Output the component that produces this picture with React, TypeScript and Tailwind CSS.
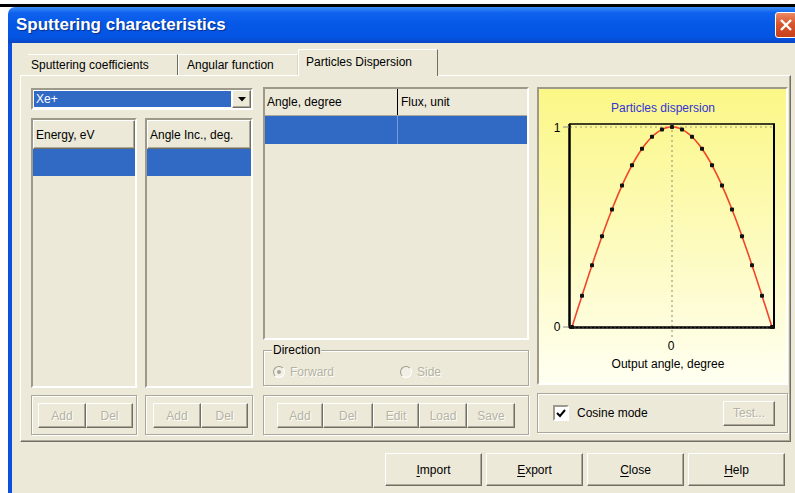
import React from "react";

const face = "bg-[#ece9d8]";
const raised =
  "border border-t-white border-l-white border-b-[#716f64] border-r-[#716f64] shadow-[inset_-1px_-1px_0_#aca899]";
const sunken =
  "border-2 border-t-[#9d9a8c] border-l-[#9d9a8c] border-b-white border-r-white";
const etched =
  "border border-[#aca899] shadow-[inset_1px_1px_0_#fff,1px_1px_0_#fff]";

function Btn({
  label,
  w,
  h = 25,
  disabled,
  hot,
}: {
  label: string;
  w: number;
  h?: number;
  disabled?: boolean;
  hot?: boolean;
}) {
  const first = label.slice(0, 1);
  const rest = label.slice(1);
  return (
    <div
      className={`${raised} ${face} flex shrink-0 items-center justify-center ${
        disabled ? "text-[#b5b2a2] [text-shadow:1px_1px_0_#fff]" : "text-black"
      }`}
      style={{ width: w, height: h }}
    >
      {hot ? (
        <span>
          <span className="underline underline-offset-2">{first}</span>
          {rest}
        </span>
      ) : (
        label
      )}
    </div>
  );
}

function ListBox({ title, w }: { title: string; w: number }) {
  return (
    <div className={`${sunken} bg-[#ece9d8] flex h-[270px] flex-col`} style={{ width: w }}>
      <div className={`${raised} flex h-[29px] items-center px-[2px]`}>{title}</div>
      <div className="h-[27px] bg-[#316ac5]" />
    </div>
  );
}

function Chart() {
  const x0 = 33;
  const base = 238;
  const amp = 200;
  const curve = Array.from({ length: 121 }, (_, i) => {
    const t = -Math.PI / 2 + (i * Math.PI) / 120;
    return `${x0 + (i * 200) / 120},${base - amp * Math.cos(t)}`;
  }).join(" ");
  const dots = Array.from({ length: 21 }, (_, i) => {
    const t = -Math.PI / 2 + (i * Math.PI) / 20;
    return [x0 + i * 10, base - amp * Math.cos(t)];
  });
  return (
    <svg width={247} height={294} className="block">
      <defs>
        <linearGradient id="bg" x1="0" y1="0" x2="0" y2="1">
          <stop offset="0" stopColor="#fbf786" />
          <stop offset="0.55" stopColor="#fdfbc0" />
          <stop offset="1" stopColor="#fffff2" />
        </linearGradient>
      </defs>
      <rect width={247} height={294} fill="url(#bg)" />
      <text
        x={124}
        y={23}
        textAnchor="middle"
        fontSize={12}
        fill="#3333d6"
        fontFamily="Liberation Sans, Arial, sans-serif"
      >
        Particles dispersion
      </text>
      {/* grid */}
      <line x1={31} y1={38} x2={234} y2={38} stroke="#9a9a88" strokeDasharray="2 3" />
      <line x1={133} y1={36} x2={133} y2={248} stroke="#8a8a7a" strokeDasharray="2 3" />
      {/* frame */}
      <line x1={30} y1={35} x2={236} y2={35} stroke="#000" strokeWidth={1.5} />
      <line x1={30.5} y1={35} x2={30.5} y2={239} stroke="#000" strokeWidth={2.5} />
      <line x1={235} y1={35} x2={235} y2={239} stroke="#000" strokeWidth={2} />
      <line x1={30} y1={238.5} x2={236} y2={238.5} stroke="#000" strokeWidth={2.5} />
      <line x1={31} y1={239} x2={235} y2={239} stroke="#555" strokeDasharray="2 2" />
      {/* ticks */}
      <line x1={24} y1={38} x2={30} y2={38} stroke="#888" />
      <line x1={24} y1={238} x2={30} y2={238} stroke="#888" />
      <text x={18} y={43} textAnchor="middle" fontSize={12} fontFamily="Liberation Sans, Arial, sans-serif">
        1
      </text>
      <text x={18} y={242} textAnchor="middle" fontSize={12} fontFamily="Liberation Sans, Arial, sans-serif">
        0
      </text>
      <text x={132} y={261} textAnchor="middle" fontSize={12} fontFamily="Liberation Sans, Arial, sans-serif">
        0
      </text>
      <text x={129} y={279} textAnchor="middle" fontSize={12} fontFamily="Liberation Sans, Arial, sans-serif">
        Output angle, degree
      </text>
      <polyline points={curve} fill="none" stroke="#f2462a" strokeWidth={1.6} />
      {dots.map(([x, y], i) => (
        <rect key={i} x={x - 2} y={y - 2} width={4} height={4} rx={1} fill="#111" />
      ))}
    </svg>
  );
}

function Radio({ label, checked }: { label: string; checked?: boolean }) {
  return (
    <div className="flex items-center gap-[5px] text-[#b5b2a2] [text-shadow:1px_1px_0_#fff]">
      <div className="relative h-[12px] w-[12px] rounded-full border border-t-[#9d9a8c] border-l-[#9d9a8c] border-b-white border-r-white bg-[#f2f0e6]">
        {checked && (
          <div className="absolute left-[3px] top-[3px] h-[4px] w-[4px] rounded-full bg-[#a8a596]" />
        )}
      </div>
      {label}
    </div>
  );
}

export default function App() {
  return (
    <div className="h-[493px] w-[795px] overflow-hidden bg-white font-['Liberation_Sans',Arial,sans-serif] text-[12px] text-black">
      <div className="h-[4px]" />
      <div className="h-[3px] bg-black" />
      <div className="ml-[8px] flex h-[486px] w-[800px] flex-col overflow-hidden rounded-tl-[7px]">
        {/* title bar */}
        <div className="flex h-[36px] shrink-0 items-center bg-[linear-gradient(to_bottom,#3d8ff6_0%,#0f62ee_16%,#0558e6_50%,#0454e2_85%,#0a46c4_100%)] pl-[8px] pr-[11px]">
          <span className="text-[17px] font-bold text-white [text-shadow:1px_1px_1px_#0b2f8a]">
            Sputtering characteristics
          </span>
          <div className="ml-auto flex h-[26px] w-[22px] items-center justify-center rounded-[3px] border border-white bg-[linear-gradient(to_bottom,#ec8a64,#d9542c_45%,#c7401c)]">
            <svg width="14" height="14" viewBox="0 0 14 14">
              <path d="M2 2 L12 12 M12 2 L2 12" stroke="#fff" strokeWidth="2.4" />
            </svg>
          </div>
        </div>

        {/* client area */}
        <div className={`flex flex-1 flex-col border-l-[4px] border-[#0b50dc] ${face} pl-[8px] pt-[5px]`}>
          {/* tabs */}
          <div className="flex h-[27px] items-end pl-[8px]">
            <div className="flex h-[21px] w-[150px] items-center border-r border-t border-r-[#716f64] border-t-white pl-[3px]">
              Sputtering coefficients
            </div>
            <div className="flex h-[21px] w-[120px] items-center border-l border-r border-t border-l-white border-r-[#d8d5c6] border-t-white pl-[8px]">
              Angular function
            </div>
            <div className="relative top-[1px] flex h-[27px] w-[140px] items-center border-l border-r border-t border-l-white border-r-[#716f64] border-t-white bg-[#ece9d8] pb-[3px] pl-[7px]">
              Particles Dispersion
            </div>
          </div>

          {/* tab page */}
          <div className="flex h-[367px] w-[771px] items-start gap-[10px] border border-b-[#716f64] border-l-white border-r-[#716f64] border-t-white pl-[10px] pt-[12px] shadow-[inset_-1px_-1px_0_#aca899]">
            {/* ions and energies */}
            <div className="flex w-[222px] flex-col">
              <div className={`${sunken} flex h-[22px] bg-white`}>
                <div className="m-[1px] flex flex-1 items-center bg-[#316ac5] pl-[2px] text-white">Xe+</div>
                <div className={`${raised} ${face} flex w-[19px] items-center justify-center`}>
                  <svg width="8" height="5" viewBox="0 0 8 5">
                    <path d="M0 0 H8 L4 4.5 Z" fill="#000" />
                  </svg>
                </div>
              </div>
              <div className="mt-[8px] flex gap-[8px]">
                <ListBox title="Energy, eV" w={106} />
                <ListBox title="Angle Inc., deg." w={108} />
              </div>
              <div className="mt-[7px] flex gap-[8px]">
                <div className={`${etched} flex h-[40px] w-[106px] pl-[6px] pt-[7px]`}>
                  <Btn label="Add" w={48} disabled />
                  <Btn label="Del" w={47} disabled />
                </div>
                <div className={`${etched} flex h-[40px] w-[108px] pl-[7px] pt-[7px]`}>
                  <Btn label="Add" w={48} disabled />
                  <Btn label="Del" w={47} disabled />
                </div>
              </div>
            </div>

            {/* flux table */}
            <div className="-mt-[1px] flex w-[266px] flex-col">
              <div className={`${sunken} h-[253px]`}>
                <div className="flex h-[27px] border-b border-[#aca899]">
                  <div className="flex w-[133px] items-center border-r border-black pl-[2px]">Angle, degree</div>
                  <div className="flex flex-1 items-center pl-[3px]">Flux, unit</div>
                </div>
                <div className="flex h-[28px] bg-[#316ac5]">
                  <div className="w-[133px] border-r border-[#7d9ad6]" />
                </div>
              </div>
              <div className={`${etched} relative mt-[10px] h-[36px]`}>
                <span className="absolute -top-[8px] left-[8px] bg-[#ece9d8] px-[1px] leading-[14px]">Direction</span>
                <div className="flex h-full items-center pl-[9px] pt-[8px]">
                  <div className="w-[127px]">
                    <Radio label="Forward" checked />
                  </div>
                  <Radio label="Side" />
                </div>
              </div>
              <div className={`${etched} mt-[9px] flex h-[40px] pl-[13px] pt-[7px]`}>
                <Btn label="Add" w={46} disabled />
                <Btn label="Del" w={50} disabled />
                <Btn label="Edit" w={46} disabled />
                <Btn label="Load" w={48} disabled />
                <Btn label="Save" w={48} disabled />
              </div>
            </div>

            {/* dispersion plot */}
            <div className="-ml-[2px] -mt-[1px] flex w-[251px] flex-col">
              <div className={`${sunken} h-[298px]`}>
                <Chart />
              </div>
              <div className={`${etched} mt-[8px] flex h-[40px] items-center pl-[15px] pr-[12px]`}>
                <div className="flex h-[16px] w-[16px] items-center justify-center border-2 border-b-white border-l-[#9d9a8c] border-r-white border-t-[#9d9a8c] bg-white">
                  <svg width="10" height="9" viewBox="0 0 10 9">
                    <path d="M1 4 L4 7 L9 1" fill="none" stroke="#000" strokeWidth="2" />
                  </svg>
                </div>
                <span className="ml-[8px]">Cosine mode</span>
                <div className="ml-auto">
                  <Btn label="Test..." w={52} disabled />
                </div>
              </div>
            </div>
          </div>

          {/* dialog buttons */}
          <div className="mt-[11px] flex gap-[4px] pl-[365px]">
            <Btn label="Import" w={97} h={33} hot />
            <Btn label="Export" w={97} h={33} hot />
            <Btn label="Close" w={97} h={33} hot />
            <Btn label="Help" w={97} h={33} hot />
          </div>
        </div>
      </div>
    </div>
  );
}
